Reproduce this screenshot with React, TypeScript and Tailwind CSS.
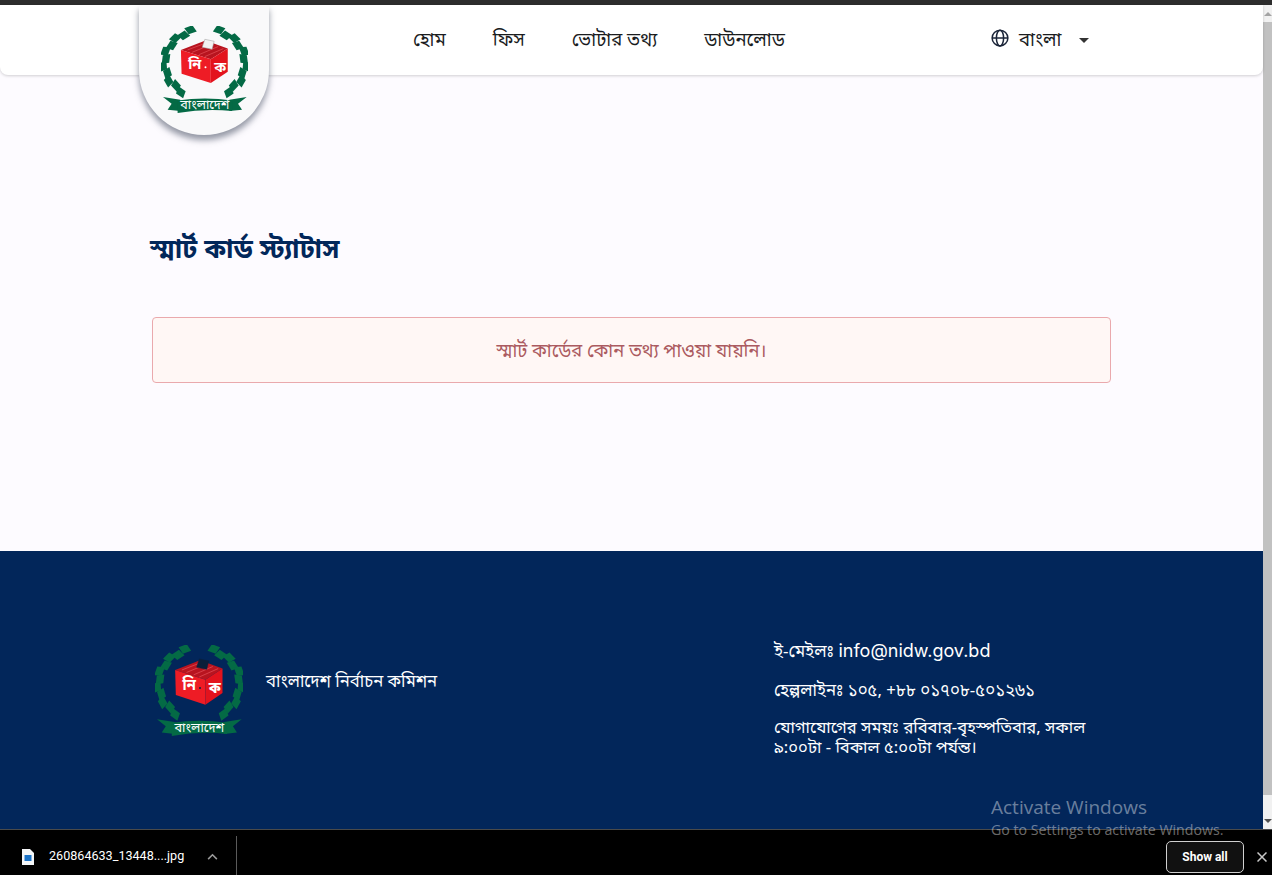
import React from "react";

const bn = "font-['Noto_Sans_Bengali','Noto_Sans','Lohit_Bengali','Liberation_Sans',sans-serif]";

const leaves = Array.from({ length: 11 }, (_, i) => {
  const t = 20 + (i * 125) / 10;
  const rad = (t * Math.PI) / 180;
  const off = i % 2 === 0 ? 4 : -4;
  return {
    x: 222 - (122 + off) * Math.sin(rad),
    y: 190 - (103 + off) * Math.cos(rad),
    r: -t,
  };
});

function Branch() {
  return (
    <>
      {leaves.map((l, i) => (
        <polygon
          key={i}
          points="-16,-11 10,-11 16,11 -10,11"
          fill="#046a45"
          transform={`translate(${l.x} ${l.y}) rotate(${l.r})`}
        />
      ))}
    </>
  );
}

function Logo({ dark }: { dark?: boolean }) {
  return (
    <svg
      viewBox="90 78 262 265"
      preserveAspectRatio="none"
      className={dark ? "w-[88px] h-[92px] shrink-0" : "w-[87px] h-[88px] shrink-0"}
    >
      <Branch />
      <g transform="translate(444 0) scale(-1 1)">
        <Branch />
      </g>
      <path d="M150 150 L224 122 L291 146 L240 178 Z" fill="#b8141f" />
      <path d="M170 150 L226 129 M184 157 L244 133 M205 164 L262 140 M222 170 L278 146" stroke="#e8535b" strokeWidth="2" />
      <path d="M214 142 L222 118 L250 124 L244 148 Z" fill={dark ? "#0b1f3a" : "#f2f2f2"} stroke={dark ? "#0b1f3a" : "#999"} strokeWidth="1.5" />
      <path d="M150 150 L240 178 L240 250 L152 222 Z" fill="#ee1c25" />
      <path d="M240 178 L291 146 L291 216 L240 250 Z" fill="#e3131d" />
      <text x="172" y="208" fill="#fff" fontSize="44" fontWeight="700" className={bn}>নি</text>
      <circle cx="224" cy="202" r="3" fill={dark ? "#0b1f3a" : "#fff"} />
      <text x="250" y="216" fill="#fff" fontSize="44" fontWeight="700" className={bn}>ক</text>
      <path d="M96 292 L148 300 L148 334 L110 330 L122 312 Z" fill="#046a45" />
      <path d="M348 292 L296 300 L296 334 L334 330 L322 312 Z" fill="#046a45" />
      <path d="M140 302 Q222 290 304 302 L304 334 Q222 326 140 340 Z" fill="#046a45" />
      <text x="222" y="328" textAnchor="middle" fill="#fff" fontSize="38" className={bn}>বাংলাদেশ</text>
    </svg>
  );
}

export default function App() {
  return (
    <div className={`relative w-[1272px] h-[875px] overflow-hidden flex flex-col bg-[#fdfbff] ${bn}`}>
      <div className="h-[5px] bg-[#2d2d2d] shrink-0" />
      <div className="flex flex-1 min-h-0">
        <div className="flex-1 flex flex-col min-w-0">
          <header className="relative z-10 h-[70px] shrink-0 bg-white rounded-b-lg shadow-[0_1px_3px_rgba(0,0,0,0.18)] flex items-center text-[18.5px] text-[#1a1c1e]">
            <div className="absolute left-[139px] top-0 w-[130px] h-[130px] bg-[#f9f9fa] rounded-b-[65px] shadow-[0_5px_6px_rgba(60,70,90,0.55)] flex justify-center pt-[21px]">
              <Logo />
            </div>
            <nav className="ml-[413px] pt-[3px] flex items-center gap-[47px]">
              <a>হোম</a>
              <a>ফিস</a>
              <a>ভোটার তথ্য</a>
              <a>ডাউনলোড</a>
            </nav>
            <div className="absolute left-[991px] top-0 h-full flex items-center">
              <svg viewBox="0 0 24 24" className="w-[18px] h-[18px] mt-[-4px]" fill="none" stroke="#1a2438" strokeWidth="2">
                <circle cx="12" cy="12" r="10.5" />
                <ellipse cx="12" cy="12" rx="4.8" ry="10.5" />
                <path d="M1.5 12h21" />
              </svg>
              <span className="ml-[10px] pt-[3px]">বাংলা</span>
              <span className="ml-[17px] w-0 h-0 border-x-[5px] border-x-transparent border-t-[5px] border-t-[#333]" />
            </div>
          </header>

          <main className="h-[476px] shrink-0 pl-[150px]">
            <h1 className="mt-[156px] text-[26.8px] leading-[40px] font-bold text-[#02275a]">স্মার্ট কার্ড স্ট্যাটাস</h1>
            <div className="mt-[46px] ml-[2px] w-[959px] h-[66px] pt-[5px] rounded bg-[#fff7f5] border border-[#eaa9ad] flex items-center justify-center text-[18.3px] text-[#ab5a60]">
              স্মার্ট কার্ডের কোন তথ্য পাওয়া যায়নি।
            </div>
          </main>

          <footer className="flex-1 bg-[#02265a] text-white pl-[155px] pt-[87px] flex">
            <div className="w-[619px] flex items-start shrink-0 pt-[7px]">
              <Logo dark />
              <span className="ml-[23px] mt-[26px] text-[16.7px] leading-[24px]">বাংলাদেশ নির্বাচন কমিশন</span>
            </div>
            <div className="w-[330px] text-[16.6px] leading-[20px]">
              <p className="mt-[1px] text-[17px] leading-[24px]">ই-মেইলঃ <span className="text-[18px] font-['Inter',sans-serif]">info@nidw.gov.bd</span></p>
              <p className="mt-[15px] text-[16.8px] leading-[24px]">হেল্পলাইনঃ ১০৫, +৮৮ ০১৭০৮-৫০১২৬১</p>
              <p className="mt-[15px]">যোগাযোগের সময়ঃ রবিবার-বৃহস্পতিবার, সকাল ৯:০০টা - বিকাল ৫:০০টা পর্যন্ত।</p>
            </div>
          </footer>
        </div>

        <div className="w-[9px] shrink-0 bg-[#f1f1f1] flex flex-col items-center">
          <div className="h-[17px] flex items-center justify-center">
            <span className="w-0 h-0 border-x-[4px] border-x-transparent border-b-[4px] border-b-[#a3a3a3]" />
          </div>
          <div className="w-full h-[773px] bg-[#c1c1c1]" />
          <div className="mt-auto h-[17px] flex items-center justify-center">
            <span className="w-0 h-0 border-x-[4px] border-x-transparent border-t-[4px] border-t-[#505050]" />
          </div>
        </div>
      </div>

      <div className="h-[46px] shrink-0 bg-black border-t border-t-[#4a4a4a] pt-[8px] flex items-center font-['Roboto',sans-serif]">
        <svg viewBox="0 0 12 16" className="ml-[22px] w-[12px] h-[16px]">
          <path d="M0 0H8L12 4V16H0Z" fill="#f4f6f8" />
          <rect x="2.5" y="6" width="7" height="6" fill="#1a73c8" />
        </svg>
        <span className="ml-[15px] text-[12.6px] text-white w-[158px]">260864633_13448....jpg</span>
        <svg viewBox="0 0 12 8" className="w-[11px] h-[7px]" fill="none" stroke="#9a9a9a" strokeWidth="1.8">
          <path d="M1 7l5-5 5 5" />
        </svg>
        <div className="ml-[18px] w-px h-[39px] self-end bg-[#5a5a5a]" />
        <div className="ml-auto mr-[13px] w-[78px] h-[32px] rounded-[5px] border border-[#d0d0d0] bg-[#111] flex items-center justify-center text-[12px] font-bold text-white">Show all</div>
        <svg viewBox="0 0 10 10" className="mr-[5px] w-[10px] h-[10px]" fill="none" stroke="#c8c8c8" strokeWidth="1.5">
          <path d="M0.5 0.5l9 9M9.5 0.5l-9 9" />
        </svg>
      </div>

      <div className="absolute left-[991px] top-[794px] text-[rgba(255,255,255,0.42)] font-['Open_Sans',sans-serif]">
        <div className="text-[19px] leading-[26px]">Activate Windows</div>
        <div className="text-[14.2px] leading-[20px]">Go to Settings to activate Windows.</div>
      </div>
    </div>
  );
}
